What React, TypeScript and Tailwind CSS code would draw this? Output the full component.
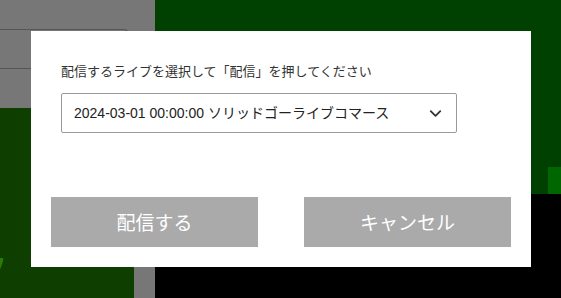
import React from 'react';
import { ChevronDown } from 'lucide-react';

const font = { fontFamily: '"Noto Sans CJK JP", sans-serif' };

const Backdrop: React.FC = () => (
  <div className="flex h-[298px] w-[561px]">
    <div className="flex w-[155px] flex-col">
      <div className="relative h-[108px] bg-[#777777]">
        <div className="absolute left-[-10px] top-[29px] h-[60px] w-[138px] rounded-tr-[4px] border-t border-r border-[#555555]" />
        <div className="absolute left-0 top-[68px] h-px w-full bg-[#555555]" />
      </div>
      <div className="flex flex-1">
        <div className="relative w-[134px] overflow-hidden bg-[#0e3e00]">
          <div className="absolute left-[-40px] top-[120px] h-[64px] w-[44px] rounded-br-[40px] bg-[#2c7a06]" />
          <div className="absolute left-[-40px] top-[100px] h-[50px] w-[44px] bg-[#0e3e00]" />
        </div>
        <div className="flex-1 bg-[#777777]" />
      </div>
    </div>
    <div className="flex flex-1 flex-col">
      <div className="flex h-[194px] items-end justify-end bg-[#004000]">
        <div className="h-[27px] w-[13px] bg-[#006600]" />
      </div>
      <div className="flex-1 bg-black" />
    </div>
  </div>
);

export default function App() {
  return (
    <div className="relative h-[298px] w-[561px] overflow-hidden" style={font}>
      <Backdrop />
      <div className="absolute left-[31px] top-[31px] flex h-[236px] w-[500px] flex-col bg-white px-[20px] pt-[30px] pb-[20px]">
        <div className="px-[10px]">
          <p className="text-[13px] leading-[19px] text-[#333333]">
            配信するライブを選択して「配信」を押してください
          </p>
          <div className="mt-[13px] flex h-[40px] w-[396px] items-center justify-between rounded-[2px] border border-[#9a9a9a] pl-[12px] pr-[11px]">
            <span className="text-[14px] text-[#222222]" style={{ fontFamily: '"Liberation Sans", "Noto Sans CJK JP", sans-serif' }}>
              2024-03-01 00:00:00 ソリッドゴーライブコマース
            </span>
            <ChevronDown size={19} strokeWidth={2.3} className="text-[#333333]" />
          </div>
        </div>
        <div className="mt-auto flex justify-between">
          <button className="h-[50px] w-[207px] bg-[#aaaaaa] text-[19px] text-white">配信する</button>
          <button className="h-[50px] w-[207px] bg-[#aaaaaa] text-[19px] text-white">キャンセル</button>
        </div>
      </div>
    </div>
  );
}
